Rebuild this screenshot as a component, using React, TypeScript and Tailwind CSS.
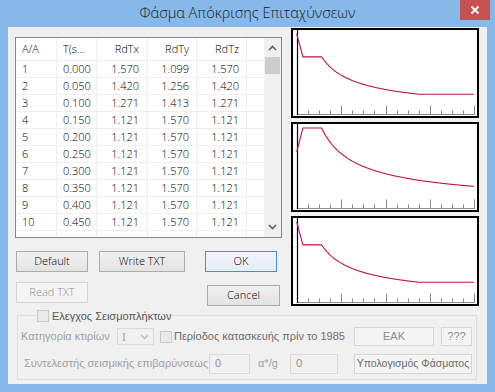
import React from "react";

const rows = [
  ["1", "0.000", "1.570", "1.099", "1.570"],
  ["2", "0.050", "1.420", "1.256", "1.420"],
  ["3", "0.100", "1.271", "1.413", "1.271"],
  ["4", "0.150", "1.121", "1.570", "1.121"],
  ["5", "0.200", "1.121", "1.570", "1.121"],
  ["6", "0.250", "1.121", "1.570", "1.121"],
  ["7", "0.300", "1.121", "1.570", "1.121"],
  ["8", "0.350", "1.121", "1.570", "1.121"],
  ["9", "0.400", "1.121", "1.570", "1.121"],
  ["10", "0.450", "1.121", "1.570", "1.121"],
];

const cols = [
  { w: "w-[41px]", align: "pl-[6px] text-left" },
  { w: "w-[40px]", align: "pl-[6px] text-left" },
  { w: "w-[51px]", align: "pr-[8px] text-right" },
  { w: "w-[49px]", align: "pr-[7px] text-right" },
  { w: "w-[50px]", align: "pr-[7px] text-right" },
];

function Row({ cells, header }: { cells: string[]; header?: boolean }) {
  return (
    <div className={`flex border-b border-[#f0f0f0] ${header ? "h-[23px]" : "h-[17px]"}`}>
      {cells.map((c, i) => (
        <div
          key={i}
          className={`${cols[i].w} ${cols[i].align} shrink-0 border-r border-[#f0f0f0] leading-[16px] ${header ? "pt-[3px]" : ""}`}
        >
          {c}
        </div>
      ))}
      <div className="flex-1" />
    </div>
  );
}

function SpectrumList() {
  return (
    <div className="flex h-[201px] w-[267px] border border-[#828790] bg-white text-black">
      <div className="flex w-[248px] flex-col overflow-hidden">
        <Row header cells={["A/A", "T(s...", "RdTx", "RdTy", "RdTz"]} />
        {rows.map((r) => (
          <Row key={r[0]} cells={r} />
        ))}
        <div className="flex flex-1">
          {cols.map((c, i) => (
            <div key={i} className={`${c.w} shrink-0 border-r border-[#f0f0f0]`} />
          ))}
        </div>
      </div>
      <div className="flex w-[17px] flex-col items-center bg-[#f0f0f0]">
        <svg width="17" height="17" viewBox="0 0 17 17" className="mt-[2px]">
          <path d="M5 10 L8.5 6.5 L12 10" fill="none" stroke="#606060" strokeWidth="1.6" />
        </svg>
        <div className="h-[17px] w-[15px] bg-[#cdcdcd]" />
        <div className="flex-1" />
        <svg width="17" height="17" viewBox="0 0 17 17" className="mb-[2px]">
          <path d="M5 7 L8.5 10.5 L12 7" fill="none" stroke="#606060" strokeWidth="1.6" />
        </svg>
      </div>
    </div>
  );
}

function Chart({ kind }: { kind: "x" | "y" }) {
  const x0 = 3.7;
  const sx = 41.5;
  const base = 84;
  const sy = 51;
  const pts: string[] = [];
  for (let t = 0; t <= 4.27; t += 0.01) {
    let v: number;
    if (kind === "x") {
      if (t < 0.15) v = 1.57 + ((1.121 - 1.57) * t) / 0.15;
      else if (t < 0.6) v = 1.121;
      else v = Math.max(0.386, 1.121 * Math.pow(0.6 / t, 2 / 3));
    } else {
      if (t < 0.15) v = 1.099 + ((1.57 - 1.099) * t) / 0.15;
      else if (t < 0.6) v = 1.57;
      else v = 1.57 * Math.pow(0.6 / t, 2 / 3);
    }
    pts.push(`${(x0 + t * sx).toFixed(2)},${(base - v * sy).toFixed(2)}`);
  }
  const ticks = Array.from({ length: 16 }, (_, i) => i + 1);
  return (
    <div className="h-[90px] w-[188px] border-2 border-black bg-white">
      <svg width="184" height="86" viewBox="0 0 184 86">
        <line x1="4" y1="84.5" x2="182" y2="84.5" stroke="#8a8a8a" strokeWidth="1" />
        {ticks.map((i) => {
          const x = Math.round(x0 + i * 11.1) + 0.5;
          const h = i % 4 === 0 ? 9 : 4;
          return <line key={i} x1={x} y1={84.5 - h} x2={x} y2={84.5} stroke="#8a8a8a" strokeWidth="1" />;
        })}
        <line x1="4.5" y1="0" x2="4.5" y2="85" stroke="#000" strokeWidth="1.2" />
        <polyline points={pts.join(" ")} fill="none" stroke="#c0143c" strokeWidth="1.1" />
      </svg>
    </div>
  );
}

function Btn({
  children,
  className = "",
  primary,
  disabled,
}: {
  children: React.ReactNode;
  className?: string;
  primary?: boolean;
  disabled?: boolean;
}) {
  const tone = disabled
    ? "border-[#d5d5d5] bg-[#f4f4f4] text-[#8d8d8d]"
    : primary
    ? "border-[#4a8fd6] bg-gradient-to-b from-[#f3f6fb] to-[#e6ecf3] text-black"
    : "border-[#acacac] bg-gradient-to-b from-[#f0f0f0] to-[#e3e3e3] text-black";
  return (
    <div className={`flex shrink-0 items-center justify-center whitespace-nowrap border ${tone} ${className}`}>
      {children}
    </div>
  );
}

function Check({ className = "" }: { className?: string }) {
  return <div className={`h-[12px] w-[12px] shrink-0 border border-[#c8c8c8] bg-[#eaeaea] ${className}`} />;
}

export default function App() {
  return (
    <div className="flex h-[392px] w-[495px] flex-col bg-[#86b8ea] font-['Open_Sans',sans-serif] text-[11px] font-light">
      <div className="relative flex h-[27px] shrink-0 items-center justify-center">
        <span className="pb-[1px] text-[14.5px] text-[#1a1a1a]">Φάσμα Απόκρισης Επιταχύνσεων</span>
        <div className="absolute right-[5px] top-0 flex h-[20px] w-[30px] items-center justify-center bg-[#c75050]">
          <svg width="10" height="10" viewBox="0 0 10 10">
            <path d="M1.5 1.5 L8.5 8.5 M8.5 1.5 L1.5 8.5" stroke="#fff" strokeWidth="1.8" />
          </svg>
        </div>
      </div>

      <div className="mx-[8px] mb-[8px] flex flex-1 flex-col bg-[#f0f0f0]">
        <div className="flex">
          <div className="ml-[7px] mt-[10px] flex w-[267px] flex-col">
            <SpectrumList />
            <div className="ml-[1px] mt-[13px] flex">
              <Btn className="h-[21px] w-[72px]">Default</Btn>
              <Btn className="ml-[11px] h-[21px] w-[86px]">Write TXT</Btn>
              <Btn primary className="ml-[20px] h-[21px] w-[72px]">
                OK
              </Btn>
            </div>
            <div className="ml-[1px] mt-[10px] flex items-start">
              <Btn disabled className="h-[21px] w-[72px]">
                Read TXT
              </Btn>
              <Btn className="ml-[119px] mt-[3px] h-[21px] w-[73px]">Cancel</Btn>
            </div>
          </div>
          <div className="ml-[9px] mt-[1px] flex flex-col gap-[4px]">
            <Chart kind="x" />
            <Chart kind="y" />
            <Chart kind="x" />
          </div>
        </div>

        <div className="relative ml-[9px] mt-[9px] flex h-[65px] w-[460px] flex-col border border-[#dcdcdc] font-['Liberation_Sans',Arial,sans-serif] font-normal">
          <div className="absolute left-[17px] top-[-8px] flex items-center gap-[3px] bg-[#f0f0f0] px-[2px] text-[#555]">
            <Check />
            <span>Ελεγχος Σεισμοπλήκτων</span>
          </div>
          <div className="mt-[11px] flex h-[19px] items-center">
            <span className="ml-[3px] w-[96px] shrink-0 whitespace-nowrap text-[#a0a0a0]">Κατηγορία κτιρίων</span>
            <div className="flex h-[17px] w-[37px] shrink-0 items-center border border-[#d9d9d9] bg-[#f0f0f0] text-[#a0a0a0]">
              <span className="ml-[4px] flex-1 font-['Liberation_Serif',serif] text-[12px]">I</span>
              <svg width="9" height="6" viewBox="0 0 9 6" className="mr-[4px]">
                <path d="M1 1 L4.5 4.5 L8 1" fill="none" stroke="#b8b8b8" strokeWidth="1.3" />
              </svg>
            </div>
            <Check className="ml-[6px]" />
            <span className="ml-[2px] whitespace-nowrap text-[#6d6d6d]">Περίοδος κατασκευής πρίν το 1985</span>
            <div className="ml-auto mr-[4px] flex">
              <Btn disabled className="h-[19px] w-[80px]">
                ΕΑΚ
              </Btn>
              <Btn disabled className="ml-[7px] h-[19px] w-[31px]">
                ???
              </Btn>
            </div>
          </div>
          <div className="mt-[7px] flex h-[21px] items-center">
            <span className="ml-[6px] w-[185px] shrink-0 whitespace-nowrap text-[#a0a0a0]">
              Συντελεστής σεισμικής επιβαρύνσεως
            </span>
            <div className="flex h-[20px] w-[41px] shrink-0 items-center border border-[#d9d9d9] bg-[#f0f0f0] pl-[5px] text-[#8d8d8d]">
              0
            </div>
            <span className="ml-[8px] w-[32px] shrink-0 text-[#a0a0a0]">α*/g</span>
            <div className="flex h-[20px] w-[48px] shrink-0 items-center border border-[#d9d9d9] bg-[#f0f0f0] pl-[5px] text-[#8d8d8d]">
              0
            </div>
            <Btn disabled className="ml-auto mr-[4px] h-[20px] w-[118px] text-[10.5px] !text-[#6d6d6d]">
              Υπολογισμός Φάσματος
            </Btn>
          </div>
        </div>
      </div>
    </div>
  );
}
